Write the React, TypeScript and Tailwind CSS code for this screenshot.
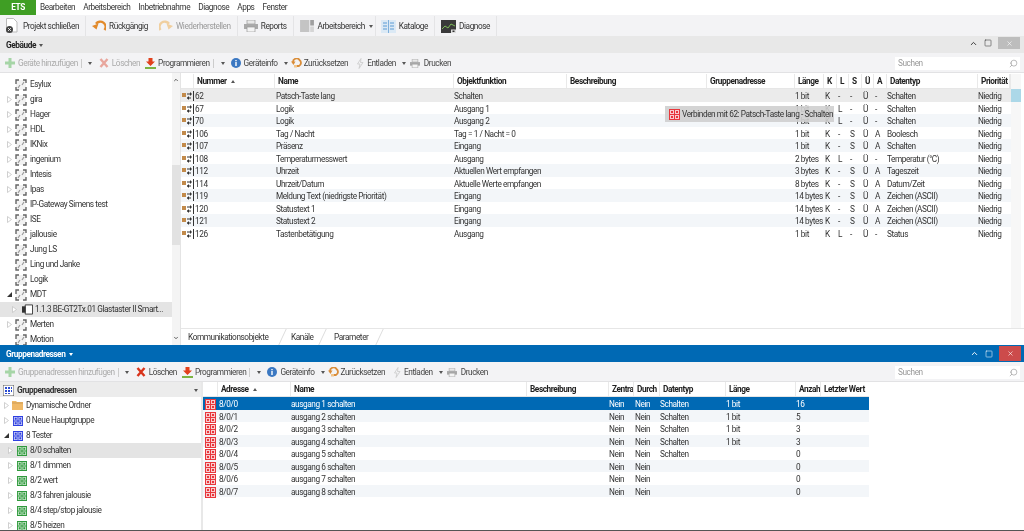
import { type ReactNode } from "react";
import { ChevronUp, Search, Square, X } from "lucide-react";

const topRows = [
  ["62", "Patsch-Taste lang", "Schalten", "1 bit", "K", "-", "-", "Ü", "-", "Schalten", "Niedrig"],
  ["67", "Logik", "Ausgang 1", "1 bit", "K", "L", "-", "Ü", "-", "Schalten", "Niedrig"],
  ["70", "Logik", "Ausgang 2", "1 bit", "K", "L", "-", "Ü", "-", "Schalten", "Niedrig"],
  ["106", "Tag / Nacht", "Tag = 1 / Nacht = 0", "1 bit", "K", "-", "S", "Ü", "A", "Boolesch", "Niedrig"],
  ["107", "Präsenz", "Eingang", "1 bit", "K", "-", "S", "Ü", "A", "Schalten", "Niedrig"],
  ["108", "Temperaturmesswert", "Ausgang", "2 bytes", "K", "L", "-", "Ü", "-", "Temperatur (°C)", "Niedrig"],
  ["112", "Uhrzeit", "Aktuellen Wert empfangen", "3 bytes", "K", "-", "S", "Ü", "A", "Tageszeit", "Niedrig"],
  ["114", "Uhrzeit/Datum", "Aktuelle Werte empfangen", "8 bytes", "K", "-", "S", "Ü", "A", "Datum/Zeit", "Niedrig"],
  ["119", "Meldung Text (niedrigste Priorität)", "Eingang", "14 bytes", "K", "-", "S", "Ü", "A", "Zeichen (ASCII)", "Niedrig"],
  ["120", "Statustext 1", "Eingang", "14 bytes", "K", "-", "S", "Ü", "A", "Zeichen (ASCII)", "Niedrig"],
  ["121", "Statustext 2", "Eingang", "14 bytes", "K", "-", "S", "Ü", "A", "Zeichen (ASCII)", "Niedrig"],
  ["126", "Tastenbetätigung", "Ausgang", "1 bit", "K", "L", "-", "Ü", "-", "Status", "Niedrig"],
];

const bottomRows = [
  ["8/0/0", "ausgang 1 schalten", "Schalten", "1 bit", "16"],
  ["8/0/1", "ausgang 2 schalten", "Schalten", "1 bit", "5"],
  ["8/0/2", "ausgang 3 schalten", "Schalten", "1 bit", "3"],
  ["8/0/3", "ausgang 4 schalten", "Schalten", "1 bit", "3"],
  ["8/0/4", "ausgang 5 schalten", "Schalten", "", "0"],
  ["8/0/5", "ausgang 6 schalten", "", "", "0"],
  ["8/0/6", "ausgang 7 schalten", "", "", "0"],
  ["8/0/7", "ausgang 8 schalten", "", "", "0"],
];

const makers = [
  ["Esylux", false],
  ["gira", true],
  ["Hager", true],
  ["HDL", true],
  ["IKNix", true],
  ["ingenium", true],
  ["Intesis", true],
  ["Ipas", true],
  ["IP-Gateway Simens test", false],
  ["ISE", true],
  ["jallousie", false],
  ["Jung LS", false],
  ["Ling und Janke", false],
  ["Logik", false],
] as const;

const topGrid = "grid grid-cols-[13px_81px_179px_113px_140px_88px_29px_13px_12px_13px_12px_13px_91px_32px]";
const bottomGrid = "grid grid-cols-[15px_73px_236px_82px_25px_26px_66px_70px_25px_50px]";

function GroupIcon({ color, size = 11 }: { color: string; size?: number }) {
  return (
    <svg width={size} height={size} viewBox="0 0 11 11" className="shrink-0">
      <rect width="11" height="11" fill={color} />
      <path d="M1 1h4v4H1zM6 1h4v4H6zM1 6h4v4H1zM6 6h4v4H6z" fill="#fff" opacity=".75" />
      <path d="M2 2h2v2H2zM7 2h2v2H7zM2 7h2v2H2zM7 7h2v2H7z" fill={color} />
    </svg>
  );
}

function PuzzleIcon() {
  return (
    <svg width="12" height="12" viewBox="0 0 12 12" className="shrink-0" fill="none">
      <rect x="1" y="1" width="10" height="10" fill="#f2f2f2" />
      <path d="M1 5V1h3M8 1h3v3M11 8v3H8M4 11H1V8" stroke="#666" strokeWidth="1.4" />
      <path d="M3 9l2-3M9 3L7 6" stroke="#999" strokeWidth="1.2" />
    </svg>
  );
}

function ComObjectIcon() {
  return (
    <svg width="13" height="10" viewBox="0 0 13 10" className="shrink-0">
      <rect x="0" y="2" width="4" height="4" fill="#c28a4a" />
      <path d="M5 3h4M5 7h4" stroke="#333" strokeWidth="1" />
      <path d="M8 1l2 2-2 2zM7 5L5 7l2 2z" fill="#333" />
      <path d="M11.5 0v10" stroke="#333" strokeWidth="1" />
    </svg>
  );
}

function Arrow({ open }: { open?: boolean }) {
  return open ? (
    <svg width="5" height="5" viewBox="0 0 5 5" className="shrink-0">
      <path d="M5 0v5H0z" fill="#333" />
    </svg>
  ) : (
    <svg width="5" height="7" viewBox="0 0 5 7" className="shrink-0">
      <path d="M.5.5l4 3-4 3z" fill="#fff" stroke="#c4c4c4" strokeWidth=".8" />
    </svg>
  );
}

function Caret() {
  return <span className="ml-[3px] h-0 w-0 border-x-[2px] border-t-[3px] border-x-transparent border-t-[#555]" />;
}

function Plus({ dim }: { dim?: boolean }) {
  return (
    <svg width="10" height="10" viewBox="0 0 10 10" className={dim ? "opacity-50" : ""}>
      <path d="M3.5 0h3v3.5H10v3H6.5V10h-3V6.5H0v-3h3.5z" fill="#5cb85c" />
    </svg>
  );
}

function Cross({ dim }: { dim?: boolean }) {
  return (
    <svg width="10" height="10" viewBox="0 0 10 10" className={dim ? "opacity-40" : ""}>
      <path d="M1.5 1l7 8M8.5 1l-7 8" stroke="#d9341c" strokeWidth="2.4" />
    </svg>
  );
}

function DownloadRed() {
  return (
    <svg width="11" height="11" viewBox="0 0 11 11">
      <path d="M3.5 0h4v3.5H10L5.5 8 1 3.5h2.5z" fill="#e2401c" />
      <path d="M0 9h11v2H0z" fill="#7cb342" />
    </svg>
  );
}

function InfoIcon() {
  return (
    <svg width="10" height="10" viewBox="0 0 10 10">
      <circle cx="5" cy="5" r="5" fill="#3b78c2" />
      <path d="M4.3 2h1.4v1.3H4.3zM4.3 4h1.4v4H4.3z" fill="#fff" />
    </svg>
  );
}

function ResetIcon() {
  return (
    <svg width="11" height="10" viewBox="0 0 11 10" fill="none">
      <path d="M2 4.5A3.6 3.6 0 0 1 8.5 2 3.5 3.5 0 0 1 8 8H5" stroke="#d98c38" strokeWidth="1.8" />
      <path d="M0 3.5h4.5L2.5 7z" fill="#d98c38" />
      <rect x="3" y="7" width="3" height="2.5" fill="#f1c48a" />
    </svg>
  );
}

function BoltIcon() {
  return (
    <svg width="8" height="11" viewBox="0 0 8 11" fill="none">
      <path d="M5 .5L1.5 6h2.5L3 10.5 7 4.5H4.5z" stroke="#c9c9c9" strokeWidth=".8" />
    </svg>
  );
}

function PrinterIcon({ big }: { big?: boolean }) {
  const size = big ? "w-[14px] h-[12px]" : "w-[10px] h-[9px]";
  return (
    <svg viewBox="0 0 14 12" className={size}>
      <path d="M3 0h8v4H3z" fill="#e8e8e8" stroke="#999" strokeWidth=".7" />
      <path d="M0 4h14v5H0z" fill="#a9a9a9" />
      <path d="M3 7h8v5H3z" fill="#f4f4f4" stroke="#999" strokeWidth=".7" />
    </svg>
  );
}

function Sep({ tight }: { tight?: boolean }) {
  return <div className={`h-[20px] w-px shrink-0 bg-[#e4e4e6] ${tight ? "ml-px mr-[4px]" : "mx-[5px]"}`} />;
}

function MainButton({ icon, label, dim, caret }: { icon: ReactNode; label: string; dim?: boolean; caret?: boolean }) {
  return (
    <div className={`flex items-center gap-[3px] px-px whitespace-nowrap ${dim ? "text-[#9a9a9a]" : "text-[#333]"}`}>
      {icon}
      <span>{label}</span>
      {caret && <span className="ml-[-2px] flex"><Caret /></span>}
    </div>
  );
}

function PanelToolbar({ addLabel, deleteDim }: { addLabel: string; deleteDim?: boolean }) {
  return (
    <div className="flex h-5 items-center whitespace-nowrap border-b border-[#e2e2e4] bg-[#f3f3f5] pl-[5px] pt-px text-[#444]">
      <div className="flex items-center gap-[3px] text-[#aaa]">
        <Plus dim />
        <span>{addLabel}</span>
        <span className="h-[9px] w-px bg-[#ccc]" />
        <Caret />
      </div>
      <div className={`ml-[7px] flex items-center gap-[3px] ${deleteDim ? "text-[#aaa]" : ""}`}>
        <Cross dim={deleteDim} />
        <span>Löschen</span>
      </div>
      <div className="ml-[5px] flex items-center gap-[2px]">
        <DownloadRed />
        <span className="mr-px">Programmieren</span>
        <span className="h-[9px] w-px bg-[#ccc]" />
        <span className="ml-[2px] flex"><Caret /></span>
      </div>
      <div className="ml-[6px] flex items-center gap-[3px]">
        <InfoIcon />
        <span>Geräteinfo</span>
        <Caret />
      </div>
      <div className="ml-[3px] flex items-center gap-[2px]">
        <ResetIcon />
        <span>Zurücksetzen</span>
      </div>
      <div className="ml-[8px] flex items-center gap-[3px]">
        <BoltIcon />
        <span>Entladen</span>
        <Caret />
      </div>
      <div className="ml-[4px] flex items-center gap-[4px]">
        <PrinterIcon />
        <span>Drucken</span>
      </div>
      <div className="ml-auto mr-[4px] flex h-[13px] w-[125px] items-center justify-between bg-white pl-[3px] pr-[2px] text-[#999]">
        <span>Suchen</span>
        <Search size={9} strokeWidth={1.5} className="scale-x-[-1] text-[#888]" />
      </div>
    </div>
  );
}

function HeaderCell({ children }: { children?: ReactNode }) {
  return <div className="mr-px flex h-[14px] items-center overflow-hidden whitespace-nowrap bg-white pl-[3px] pt-px font-bold text-[#222]">{children}</div>;
}

function SortCaret() {
  return <span className="ml-[4px] h-0 w-0 border-x-[2px] border-b-[3px] border-x-transparent border-b-[#555]" />;
}

function TreeRow({ indent, children, active }: { indent: string; children: ReactNode; active?: boolean }) {
  return (
    <div className={`flex h-[15px] items-center gap-[3px] truncate whitespace-nowrap ${indent} ${active ? "bg-[#e4e4e4]" : ""}`}>
      {children}
    </div>
  );
}

export default function App() {
  return (
    <div className="relative flex h-[531px] w-[1024px] flex-col overflow-hidden bg-white font-['Roboto',sans-serif] text-[8.25px] leading-none tracking-[-0.42px] text-[#333] blur-[0.35px]">
      {/* Menu */}
      <div className="flex h-[15px] items-center bg-white">
        <div className="flex h-[15px] w-[36px] items-center justify-center bg-[#3f9e24] font-bold text-white">ETS</div>
        <div className="ml-[4px] flex gap-[8px]">
          {["Bearbeiten", "Arbeitsbereich", "Inbetriebnahme", "Diagnose", "Apps", "Fenster"].map((m) => (
            <span key={m}>{m}</span>
          ))}
        </div>
      </div>

      {/* Main toolbar */}
      <div className="flex h-[21px] items-center bg-[#f3f3f5] pl-[3px] pt-px">
        <MainButton
          label="Projekt schließen"
          icon={
            <svg width="16" height="16" viewBox="0 0 15 16">
              <path d="M2 .5h7l3.5 3.5v10H2z" fill="#fff" stroke="#bbb" />
              <circle cx="5" cy="11.5" r="3.5" fill="#444" />
              <path d="M3.5 10l3 3M6.5 10l-3 3" stroke="#fff" strokeWidth=".8" />
            </svg>
          }
        />
        <Sep />
        <MainButton
          label="Rückgängig"
          icon={
            <svg width="14" height="12" viewBox="0 0 14 12" fill="none">
              <path d="M12.5 10A5 5 0 0 0 4 3.8" stroke="#e28a2b" strokeWidth="2.4" />
              <path d="M0 6l6.5-2.5L4.5 9.5z" fill="#e28a2b" />
            </svg>
          }
        />
        <div className="w-[9px]" />
        <MainButton
          dim
          label="Wiederherstellen"
          icon={
            <svg width="14" height="12" viewBox="0 0 14 12" fill="none">
              <path d="M1.5 10A5 5 0 0 1 10 3.8" stroke="#f0cf9f" strokeWidth="2.4" />
              <path d="M14 6L7.5 3.5 9.5 9.5z" fill="#f0cf9f" />
            </svg>
          }
        />
        <Sep />
        <MainButton label="Reports" icon={<PrinterIcon big />} />
        <Sep />
        <MainButton
          caret
          label="Arbeitsbereich"
          icon={
            <svg width="14" height="12" viewBox="0 0 15 13" className="mr-[1px]">
              <path d="M0 0h10v13H0z" fill="#c4c4c4" />
              <path d="M11 0h4v6h-4z" fill="#a0a0a0" />
              <path d="M11 7h4v6h-4z" fill="#d5d5d5" />
            </svg>
          }
        />
        <Sep tight />
        <MainButton
          label="Kataloge"
          icon={
            <svg width="15" height="13" viewBox="0 0 15 13">
              <path d="M0 0h15v13H0z" fill="#dbe9f5" />
              <path d="M7.5 0v13" stroke="#7fb0dc" />
              <path d="M2 3h4M2 6h4M2 9h4M9 3h4M9 6h4M9 9h4" stroke="#5b9bd5" />
            </svg>
          }
        />
        <Sep />
        <MainButton
          label="Diagnose"
          icon={
            <svg width="15" height="13" viewBox="0 0 15 13">
              <path d="M0 0h15v13H0z" fill="#3a3a3a" />
              <path d="M1 9l3-3 3 2 3-4 4 2" stroke="#7dbb57" fill="none" />
              <path d="M10 9.5h5V13h-5z" fill="#ddd" />
              <path d="M11.5 10.5h2v1.5h-2z" fill="#333" />
            </svg>
          }
        />
        <Sep />
      </div>

      {/* Gebäude panel */}
      <div className="flex h-[17px] items-center justify-between bg-[#e8e8e8] pl-[6px]">
        <div className="flex items-center pt-px font-bold text-[#222]">
          Gebäude
          <Caret />
        </div>
        <div className="mb-[3px] mr-[4px] flex h-[12px] items-center gap-[6px]">
          <ChevronUp size={9} strokeWidth={2.5} className="text-[#333]" />
          <Square size={8} strokeWidth={1.6} className="text-[#333]" />
          <div className="flex h-[12px] w-[22px] items-center justify-center bg-[#bdbdbd]">
            <X size={7} strokeWidth={2} className="text-white" />
          </div>
        </div>
      </div>
      <PanelToolbar addLabel="Geräte hinzufügen" deleteDim />

      <div className="flex h-[272px]">
        {/* Geräte tree */}
        <div className="flex w-[180px] shrink-0">
          <div className="w-[172px] overflow-hidden pt-[4px]">
            {makers.map(([name, arrow]) => (
              <TreeRow key={name} indent="pl-[7px]">
                <span className="flex w-[5px] justify-center">{arrow && <Arrow />}</span>
                <PuzzleIcon />
                <span>{name}</span>
              </TreeRow>
            ))}
            <TreeRow indent="pl-[7px]">
              <span className="flex w-[5px] justify-center"><Arrow open /></span>
              <PuzzleIcon />
              <span>MDT</span>
            </TreeRow>
            <TreeRow indent="pl-[12px]" active>
              <Arrow />
              <svg width="11" height="11" viewBox="0 0 12 11" className="ml-[2px] shrink-0">
                <path d="M3.5.5h8v10h-8z" fill="#fff" stroke="#333" />
                <path d="M0 2h4v7H0z" fill="#333" />
              </svg>
              <span className="ml-[-1px]">1.1.3 BE-GT2Tx.01 Glastaster II Smart...</span>
            </TreeRow>
            <TreeRow indent="pl-[7px]">
              <span className="flex w-[5px] justify-center"><Arrow /></span>
              <PuzzleIcon />
              <span>Merten</span>
            </TreeRow>
            <TreeRow indent="pl-[7px]">
              <span className="w-[5px]" />
              <PuzzleIcon />
              <span>Motion</span>
            </TreeRow>
          </div>
          <div className="flex w-[8px] flex-col items-center justify-between bg-[#f4f4f4] py-[4px]">
            <div className="flex h-[170px] w-full flex-col items-center">
              <ChevronUp size={6} strokeWidth={3} />
              <div className="mt-[82px] h-[80px] w-full bg-[#e2e2e2]" />
            </div>
            <ChevronUp size={6} strokeWidth={3} className="rotate-180" />
          </div>
        </div>

        <div className="w-px bg-[#e4e4e4]" />

        {/* Kommunikationsobjekte */}
        <div className="flex min-w-0 flex-1 flex-col">
          <div className="flex flex-1 pr-[3px] pt-px">
            <div className="w-[830px] shrink-0">
              <div className={`${topGrid} h-[15px] border-b border-[#e6e6e6] bg-[#e9e9e9]`}>
                <HeaderCell />
                <HeaderCell>Nummer<SortCaret /></HeaderCell>
                <HeaderCell>Name</HeaderCell>
                <HeaderCell>Objektfunktion</HeaderCell>
                <HeaderCell>Beschreibung</HeaderCell>
                <HeaderCell>Gruppenadresse</HeaderCell>
                <HeaderCell>Länge</HeaderCell>
                <HeaderCell>K</HeaderCell>
                <HeaderCell>L</HeaderCell>
                <HeaderCell>S</HeaderCell>
                <HeaderCell>Ü</HeaderCell>
                <HeaderCell>A</HeaderCell>
                <HeaderCell>Datentyp</HeaderCell>
                <HeaderCell>Priorität</HeaderCell>
              </div>
              {topRows.map((r, i) => (
                <div
                  key={r[0]}
                  className={`${topGrid} h-[12.5px] items-center whitespace-nowrap pt-[2px] ${i === 0 ? "bg-[#ebebeb]" : i % 2 === 0 ? "bg-[#f3f6f9]" : "bg-white"}`}
                >
                  <span className="pl-px"><ComObjectIcon /></span>
                  <span className="pl-px">{r[0]}</span>
                  <span className="pl-px">{r[1]}</span>
                  <span>{r[2]}</span>
                  <span />
                  <span />
                  <span>{r[3]}</span>
                  {r.slice(4, 9).map((c, j) => (
                    <span key={j} className="pl-px">{c}</span>
                  ))}
                  <span>{r[9]}</span>
                  <span>{r[10]}</span>
                </div>
              ))}
            </div>
            <div className="ml-auto w-[10px] bg-[#f7f7f7]">
              <div className="mt-[15px] h-[13px] w-full bg-[#acd8e8]" />
            </div>
          </div>
          <div className="flex h-[17px] items-center border-t border-[#e6e6e6] pl-[7px] text-[#333]">
            <span className="w-[94px]">Kommunikationsobjekte</span>
            <span className="flex w-[41px] justify-center -skew-x-[25deg] border-x border-[#ddd] leading-[16px]">
              <span className="skew-x-[25deg]">Kanäle</span>
            </span>
            <span className="ml-px flex w-[56px] justify-center -skew-x-[25deg] border-r border-[#ddd] leading-[16px]">
              <span className="skew-x-[25deg]">Parameter</span>
            </span>
          </div>
        </div>
      </div>

      {/* Gruppenadressen panel */}
      <div className="flex h-[17px] items-center justify-between bg-[#0069b4] pl-[6px] text-white">
        <div className="flex items-center pt-px font-bold">
          Gruppenadressen
          <span className="ml-[4px] h-0 w-0 border-x-[2px] border-t-[3px] border-x-transparent border-t-white" />
        </div>
        <div className="mr-[3px] flex h-[15px] items-center gap-[6px]">
          <ChevronUp size={9} strokeWidth={2.5} />
          <Square size={8} strokeWidth={1.6} />
          <div className="flex h-[15px] w-[22px] items-center justify-center bg-[#cc4b4b]">
            <X size={7} strokeWidth={2} />
          </div>
        </div>
      </div>
      <PanelToolbar addLabel="Gruppenadressen hinzufügen" />

      <div className="flex min-h-0 flex-1 border-b border-[#555]">
        <div className="w-[201px] shrink-0 overflow-hidden">
          <div className="flex h-[15px] items-center justify-between bg-[#ececec] px-[3px] pt-px">
            <div className="flex items-center gap-[3px] font-bold text-[#333]">
              <svg width="11" height="11" viewBox="0 0 11 11">
                <rect width="11" height="11" fill="#fff" stroke="#555" />
                <path d="M2 2h2v2H2zM5 2h2v2H5zM8 2h1v2H8zM2 5h2v2H2zM5 5h2v2H5zM8 5h1v2H8zM2 8h2v1H2zM5 8h2v1H5z" fill="#2a4bd0" />
              </svg>
              Gruppenadressen
            </div>
            <Caret />
          </div>
          <div className="pt-px">
            <TreeRow indent="pl-[4px]">
              <Arrow />
              <svg width="11" height="9" viewBox="0 0 11 9">
                <path d="M0 0h4l1 1h6v8H0z" fill="#f0b968" />
                <path d="M0 2h11" stroke="#b98b49" strokeWidth=".6" />
              </svg>
              <span>Dynamische Ordner</span>
            </TreeRow>
            <TreeRow indent="pl-[4px]">
              <Arrow />
              <span className="ml-px"><GroupIcon color="#2d3fe0" size={10} /></span>
              <span>0 Neue Hauptgruppe</span>
            </TreeRow>
            <TreeRow indent="pl-[4px]">
              <Arrow open />
              <span className="ml-px"><GroupIcon color="#2d3fe0" size={10} /></span>
              <span>8 Tester</span>
            </TreeRow>
            {["8/0 schalten", "8/1 dimmen", "8/2 wert", "8/3 fahren jalousie", "8/4 step/stop jalousie", "8/5 heizen"].map((g, i) => (
              <TreeRow key={g} indent="pl-[8px]" active={i === 0}>
                <Arrow />
                <span className="ml-px"><GroupIcon color="#2f9a3c" size={10} /></span>
                <span>{g}</span>
              </TreeRow>
            ))}
          </div>
        </div>
        <div className="w-[2px] bg-[#e8e8e8]" />
        <div className="flex-1">
          <div className={`${bottomGrid} h-[15px] w-[666px] border-b border-[#e6e6e6] bg-[#e9e9e9]`}>
            <HeaderCell />
            <HeaderCell>Adresse<SortCaret /></HeaderCell>
            <HeaderCell>Name</HeaderCell>
            <HeaderCell>Beschreibung</HeaderCell>
            <HeaderCell>Zentra</HeaderCell>
            <HeaderCell>Durch</HeaderCell>
            <HeaderCell>Datentyp</HeaderCell>
            <HeaderCell>Länge</HeaderCell>
            <HeaderCell>Anzah</HeaderCell>
            <HeaderCell>Letzter Wert</HeaderCell>
          </div>
          {bottomRows.map((r, i) => (
            <div
              key={r[0]}
              className={`${bottomGrid} h-[12.5px] w-[666px] items-center whitespace-nowrap pt-[2px] ${i === 0 ? "bg-[#0069b4] text-white" : i % 2 === 1 ? "bg-[#f3f6f9]" : "bg-white"}`}
            >
              <span className="pl-[2px]"><GroupIcon color="#e8373c" /></span>
              <span className="pl-[1px]">{r[0]}</span>
              <span>{r[1]}</span>
              <span />
              <span>Nein</span>
              <span className="pl-px">Nein</span>
              <span>{r[2]}</span>
              <span>{r[3]}</span>
              <span>{r[4]}</span>
              <span />
            </div>
          ))}
        </div>
      </div>

      {/* Drag hint */}
      <div className="absolute left-[665px] top-[106px] flex h-[16px] w-[169px] items-center gap-[1px] whitespace-nowrap bg-[#cfcfcf]/90 pl-[4px] text-[#333]">
        <GroupIcon color="#e8373c" />
        <span className="ml-px">Verbinden mit 62: Patsch-Taste lang - Schalten</span>
      </div>
    </div>
  );
}
